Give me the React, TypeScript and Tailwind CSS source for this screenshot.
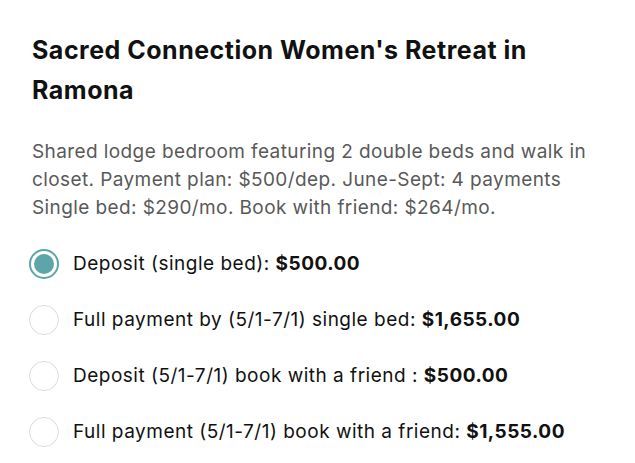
const options = [
  { label: "Deposit (single bed): ", price: "$500.00", checked: true },
  { label: "Full payment by (5/1-7/1) single bed: ", price: "$1,655.00", checked: false },
  { label: "Deposit (5/1-7/1) book with a friend : ", price: "$500.00", checked: false },
  { label: "Full payment (5/1-7/1) book with a friend: ", price: "$1,555.00", checked: false },
];

const App = () => {
  return (
    <div className="w-[635px] h-[463px] bg-white overflow-hidden font-['Inter','Liberation_Sans',sans-serif]">
      <div className="pl-8 pr-6 pt-[30px]">
        <h1 className="text-[25px] leading-[40px] font-bold tracking-[0.5px] text-[#111111]">
          Sacred Connection Women's Retreat in
          <br />
          Ramona
        </h1>
        <p className="mt-[28px] text-[19px] leading-[28px] tracking-[0.4px] text-[#595959]">
          Shared lodge bedroom featuring 2 double beds and walk in
          <br />
          closet. Payment plan: $500/dep. June-Sept: 4 payments
          <br />
          Single bed: $290/mo. Book with friend: $264/mo.
        </p>
        <div className="mt-[14px] flex flex-col">
          {options.map((o) => (
            <label key={o.label} className="flex items-center h-[56px] -ml-[3px]">
              <span
                className={
                  o.checked
                    ? "size-[30px] shrink-0 rounded-full border-2 border-[#5ca5a9] flex items-center justify-center"
                    : "size-[30px] shrink-0 rounded-full border border-[#d9dde1]"
                }
              >
                {o.checked && <span className="size-[20px] rounded-full bg-[#5ca5a9]" />}
              </span>
              <span className="ml-[14px] text-[19px] tracking-[0.5px] text-[#111111]">
                {o.label}
                <span className="font-bold">{o.price}</span>
              </span>
            </label>
          ))}
        </div>
      </div>
    </div>
  );
};

export default App;
